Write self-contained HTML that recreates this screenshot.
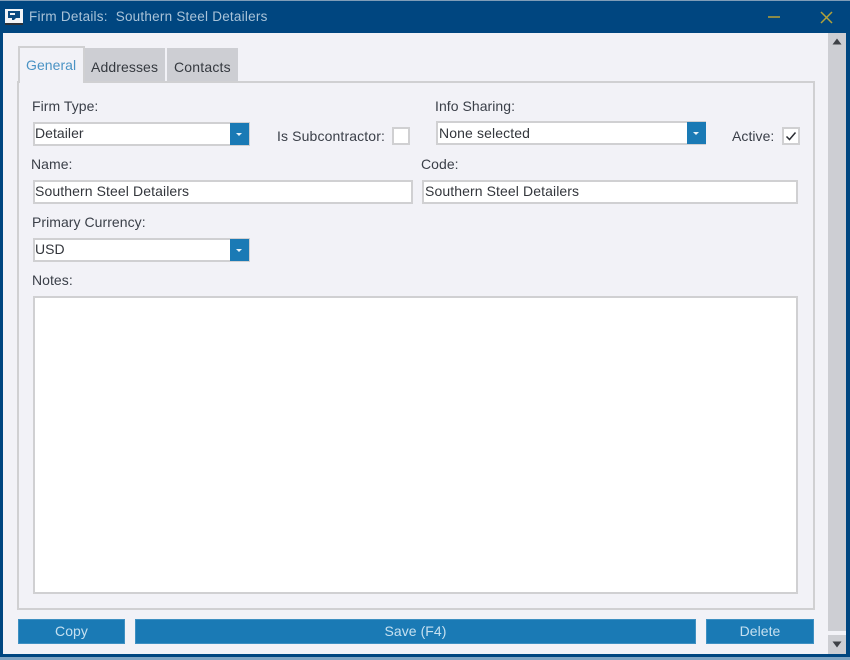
<!DOCTYPE html>
<html>
<head>
<meta charset="utf-8">
<style>
html,body{margin:0;padding:0;width:850px;height:660px;overflow:hidden;background:#004680;}
body{font-family:"Liberation Sans",sans-serif;font-size:14px;color:#3a3f48;}
#w{position:absolute;left:0;top:0;width:850px;height:660px;filter:blur(.35px);background:#004680;letter-spacing:.05px;}
#w div{position:absolute;box-sizing:border-box;}
.t{white-space:nowrap;line-height:18px;height:18px;}
.box{background:#fff;border:2px solid #d0d0d2;}
.val{color:#33363c;white-space:nowrap;line-height:18px;height:18px;}
.dd{background:#1a7ab5;}
.dd:after{content:"";position:absolute;left:6px;top:10px;border-left:3.5px solid transparent;border-right:3.5px solid transparent;border-top:3.5px solid #e8f2f8;}
.btn{background:#1a7ab5;color:#c5e0f0;text-align:center;line-height:23px;height:25px;top:619px;border:1px solid #3f90c2;}
</style>
</head>
<body>
<div id="w">
<div style="left:0;top:0;width:850px;height:1px;background:#7f9db8;"></div>
<div style="left:0;top:657px;width:850px;height:3px;background:#7fa3c2;"></div>
<div style="left:0;top:654px;width:850px;height:3px;background:#004680;"></div>

<!-- title bar -->
<div style="left:5px;top:9px;width:18px;height:15px;background:#f2f4f7;"></div>
<div style="left:5px;top:23px;width:18px;height:2px;background:#2c3138;"></div>
<svg style="position:absolute;left:5px;top:9px;" width="18" height="14" viewBox="0 0 18 14"><path d="M3 2H15V9H11L9 11H7V9H3Z" fill="#0b4a80"/><path d="M5 4H10V6H5Z" fill="#f2f4f7"/></svg>
<div class="t" style="left:29px;top:8px;color:#a9c3d8;font-size:13.5px;letter-spacing:.23px;">Firm Details:&nbsp; Southern Steel Detailers</div>
<div style="left:768px;top:16px;width:12px;height:2px;background:#8a8a48;"></div>
<svg style="position:absolute;left:820px;top:11px;" width="13" height="13" viewBox="0 0 13 13"><path d="M1 1L12 12M12 1L1 12" stroke="#b3a33a" stroke-width="1.5" fill="none"/></svg>

<!-- content -->
<div style="left:3px;top:33px;width:843px;height:621px;background:#f2f2f7;"></div>

<!-- scrollbar -->
<div style="left:828px;top:33px;width:18px;height:621px;background:#cdced3;"></div>
<div style="left:828px;top:631px;width:18px;height:4px;background:#f2f2f7;"></div>
<svg style="position:absolute;left:828px;top:36px;" width="18" height="12"><path d="M4.5 8.5L9 2.5L13.5 8.5Z" fill="#3e4146"/></svg>
<svg style="position:absolute;left:828px;top:639px;" width="18" height="12"><path d="M4.5 2.5L9 8.5L13.5 2.5Z" fill="#3e4146"/></svg>

<!-- panel -->
<div style="left:17px;top:81px;width:798px;height:529px;border:2px solid #d0d0d2;"></div>

<!-- tabs -->
<div style="left:85px;top:48px;width:80px;height:33px;background:#cdced3;"></div>
<div style="left:167px;top:48px;width:71px;height:33px;background:#cdced3;"></div>
<div style="left:18px;top:46px;width:67px;height:37px;background:#f2f2f7;border:2px solid #d0d0d2;border-bottom:0;"></div>
<div class="t" style="left:26px;top:56px;color:#4a93c4;">General</div>
<div class="t" style="left:91px;top:58px;color:#35393f;letter-spacing:.1px;">Addresses</div>
<div class="t" style="left:174px;top:58px;color:#35393f;letter-spacing:.2px;">Contacts</div>

<!-- row 1 -->
<div class="t" style="left:32px;top:97px;">Firm Type:</div>
<div class="box" style="left:33px;top:122px;width:217px;height:24px;"></div>
<div class="val" style="left:35px;top:124px;">Detailer</div>
<div class="dd" style="left:230px;top:123px;width:19px;height:22px;"></div>

<div class="t" style="left:277px;top:127px;letter-spacing:.13px;">Is Subcontractor:</div>
<div class="box" style="left:392px;top:127px;width:18px;height:18px;"></div>

<div class="t" style="left:435px;top:97px;">Info Sharing:</div>
<div class="box" style="left:436px;top:121px;width:270px;height:24px;"></div>
<div class="val" style="left:439px;top:124px;letter-spacing:.12px;">None selected</div>
<div class="dd" style="left:687px;top:122px;width:19px;height:22px;"></div>

<div class="t" style="left:732px;top:127px;">Active:</div>
<div class="box" style="left:782px;top:127px;width:18px;height:18px;"></div>
<svg style="position:absolute;left:782px;top:127px;" width="18" height="18"><path d="M4.5 9.5L7.5 12.5L13.5 5.5" stroke="#2a2d33" stroke-width="1.5" fill="none"/></svg>

<!-- row 2 -->
<div class="t" style="left:31px;top:155px;">Name:</div>
<div class="box" style="left:33px;top:180px;width:380px;height:24px;"></div>
<div class="val" style="left:35px;top:182px;letter-spacing:.1px;">Southern Steel Detailers</div>
<div class="t" style="left:421px;top:155px;">Code:</div>
<div class="box" style="left:422px;top:180px;width:376px;height:24px;"></div>
<div class="val" style="left:425px;top:182px;letter-spacing:.1px;">Southern Steel Detailers</div>

<!-- row 3 -->
<div class="t" style="left:32px;top:213px;">Primary Currency:</div>
<div class="box" style="left:33px;top:238px;width:217px;height:24px;"></div>
<div class="val" style="left:35px;top:240px;">USD</div>
<div class="dd" style="left:230px;top:239px;width:19px;height:22px;"></div>

<!-- notes -->
<div class="t" style="left:32px;top:271px;">Notes:</div>
<div class="box" style="left:33px;top:296px;width:765px;height:298px;"></div>

<!-- buttons -->
<div class="btn" style="left:18px;width:107px;">Copy</div>
<div class="btn" style="left:135px;width:561px;">Save (F4)</div>
<div class="btn" style="left:706px;width:108px;">Delete</div>
</div>
</body>
</html>
